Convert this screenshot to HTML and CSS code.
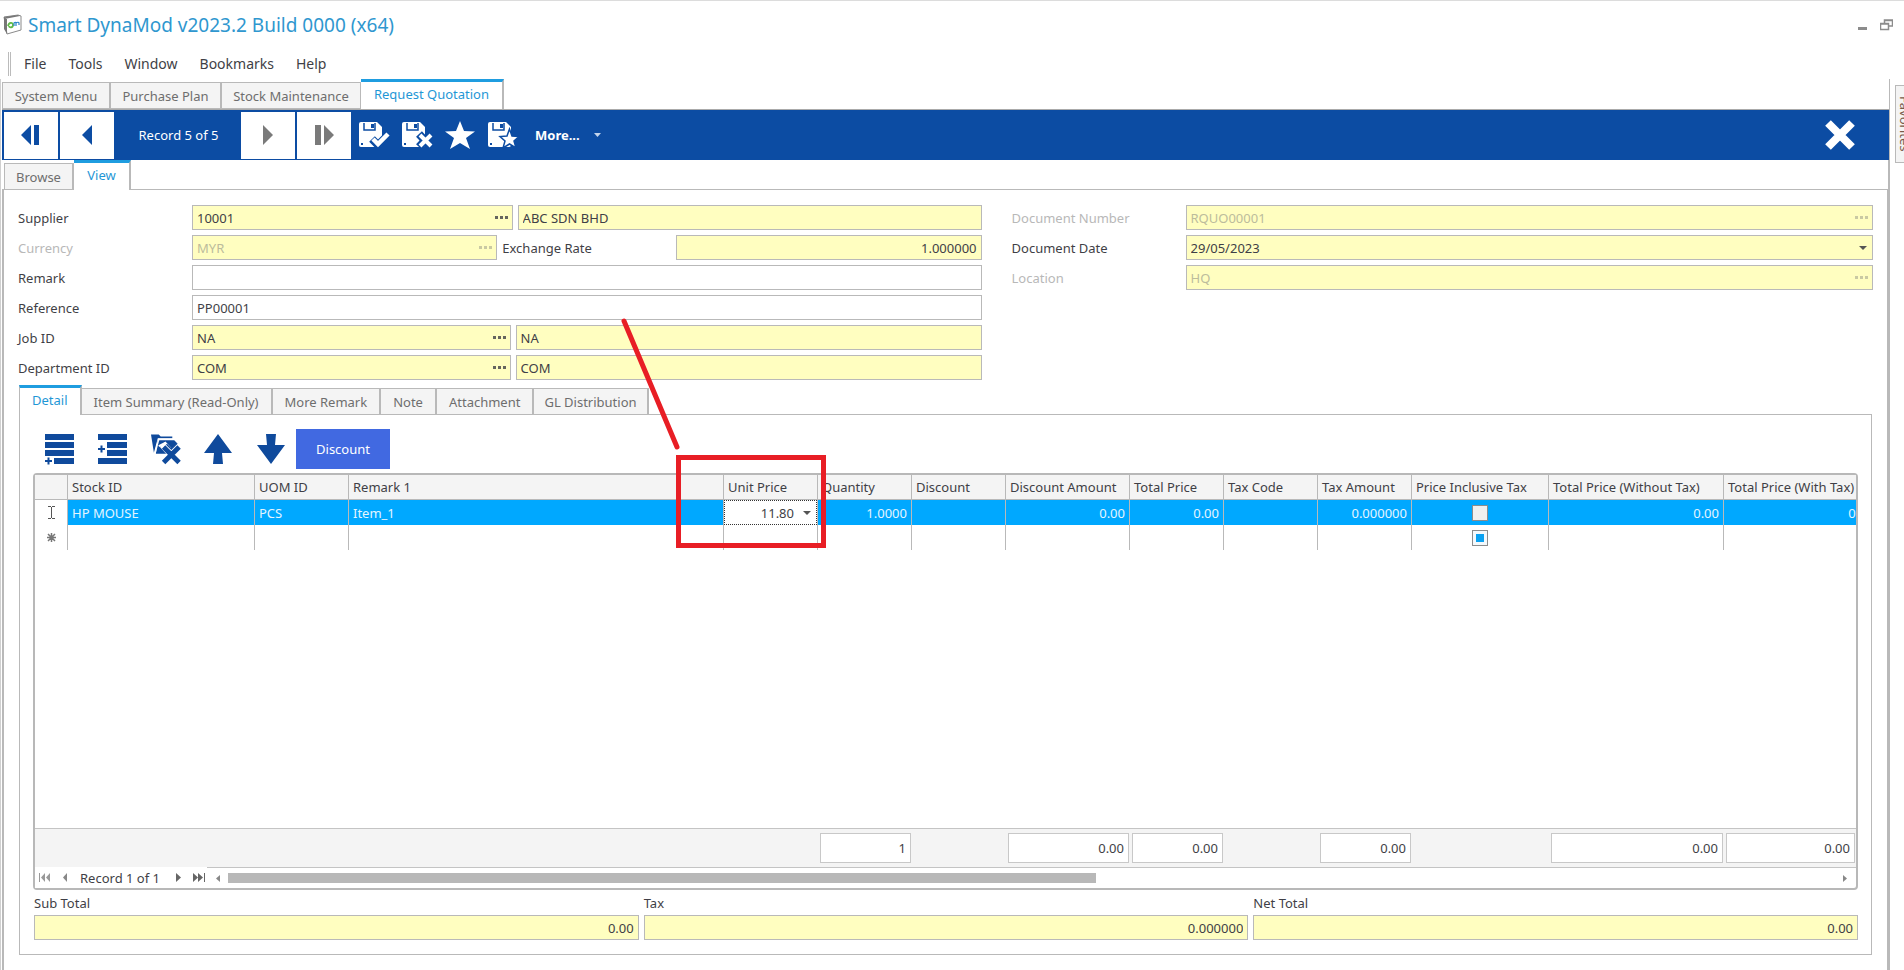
FILE: index.html
```
<!DOCTYPE html>
<html lang="en">
<head>
  <meta charset="UTF-8">
  <meta name="viewport" content="width=device-width, initial-scale=1.0">
  <title>Smart DynaMod</title>
  <link rel="stylesheet" href="styles.css">
</head>
<body>
  <header class="titlebar">
    <svg class="app-icon" width="20" height="22" viewBox="0 0 20 22">
      <path d="M1 3L15 1l3 1v14L4 20z" fill="#fff" stroke="#8a8a8a" stroke-width="1"/>
      <path d="M1 3L15 1l2 1L4 4.500z M1 3v12l3 5V5z" fill="#777"/>
      <path d="M5 12c1-4 5-4 5-1s-4 3-4 1" fill="none" stroke="#5fb946" stroke-width="1.800"/>
      <path d="M11 12V9c1-1 2-1 2 0v3m0-3c1-1 3-1 3 0v2" fill="none" stroke="#2a86c8" stroke-width="1.200"/>
    </svg>
    <h1>Smart DynaMod v2023.2 Build 0000 (x64)</h1>
    <div class="window-buttons">
      <button type="button" aria-label="Minimize"><svg width="10" height="12"><path d="M0 9.500h9" stroke="#8c8c8c" stroke-width="3"/></svg></button>
      <button type="button" aria-label="Restore"><svg width="13" height="12" fill="none" stroke="#8c8c8c"><path d="M4.500 4V1h8v6H9M4 1.500h9" stroke-width="1.500"/><path d="M.500 4.500h8v6h-8zM0 5h9" stroke-width="1.500"/></svg></button>
    </div>
  </header>

  <nav class="menu">
    <button type="button">File</button>
    <button type="button">Tools</button>
    <button type="button">Window</button>
    <button type="button">Bookmarks</button>
    <button type="button">Help</button>
  </nav>

  <div class="workspace">
    <div class="document">
      <div class="tabs main-tabs">
        <button type="button">System Menu</button>
        <button type="button">Purchase Plan</button>
        <button type="button">Stock Maintenance</button>
        <button type="button" class="active">Request Quotation</button>
      </div>

      <div class="toolbar">
        <button type="button" class="nav-btn" aria-label="First record"><svg width="20" height="20" fill="#0c4ca3"><path d="M10 0v20L0 10zM13 0h5v20h-5z"/></svg></button>
        <button type="button" class="nav-btn" aria-label="Previous record"><svg width="10" height="20" fill="#0c4ca3"><path d="M10 0v20L0 10z"/></svg></button>
        <span class="record">Record 5 of 5</span>
        <button type="button" class="nav-btn" aria-label="Next record"><svg width="10" height="20" fill="#7a7a7a"><path d="M0 0v20l10-10z"/></svg></button>
        <button type="button" class="nav-btn" aria-label="Last record"><svg width="20" height="20" fill="#7a7a7a"><path d="M10 0v20l10-10zM1 0h6v20H1z"/></svg></button>
        <button type="button" class="tool" aria-label="Save and new">
          <svg width="32" height="28" viewBox="0 0 32 28">
            <path d="M3 1h16l5 5v18q0 2-2 2H3q-2 0-2-2V3q0-2 2-2z" fill="#fff"/>
            <path d="M6 2v7h11V2" fill="none" stroke="#0c4ca3" stroke-width="1.500"/><path d="M13 3h3v4h-3zM3 22h2v2H3z" fill="#0c4ca3"/>
            <path d="M14 18l6 6 11-11" fill="none" stroke="#0c4ca3" stroke-width="8"/><path d="M15 18l5 5 10-10" fill="none" stroke="#fff" stroke-width="4.500"/>
          </svg>
        </button>
        <button type="button" class="tool" aria-label="Save and close">
          <svg width="32" height="28" viewBox="0 0 32 28">
            <path d="M3 1h16l5 5v18q0 2-2 2H3q-2 0-2-2V3q0-2 2-2z" fill="#fff"/>
            <path d="M6 2v7h11V2" fill="none" stroke="#0c4ca3" stroke-width="1.500"/><path d="M13 3h3v4h-3zM3 22h2v2H3z" fill="#0c4ca3"/>
            <path d="M18 13l12 13M30 13L18 26" fill="none" stroke="#0c4ca3" stroke-width="8"/><path d="M19 14l11 11M30 14L19 25" fill="none" stroke="#fff" stroke-width="4"/>
          </svg>
        </button>
        <button type="button" class="tool" aria-label="Bookmark">
          <svg width="32" height="28" viewBox="0 0 32 28"><path d="M16 0l4 10 11 .500-9 6.500 4 11-10-6-10 6 4-11-9-6.500L12 10z" fill="#fff"/></svg>
        </button>
        <button type="button" class="tool" aria-label="Save as favourite">
          <svg width="32" height="28" viewBox="0 0 32 28">
            <path d="M3 1h16l5 5v18q0 2-2 2H3q-2 0-2-2V3q0-2 2-2z" fill="#fff"/>
            <path d="M6 2v7h11V2" fill="none" stroke="#0c4ca3" stroke-width="1.500"/><path d="M13 3h3v4h-3zM3 22h2v2H3z" fill="#0c4ca3"/>
            <path d="M22.500 8l2.500 7 7 .500-5 4.500 2 7-6.500-4-6.500 4 2-7-5-4.500 7-.500z" fill="#fff" stroke="#0c4ca3" stroke-width="1.500"/>
          </svg>
        </button>
        <button type="button" class="more">More... <svg width="8" height="4" fill="#c5d5ec"><path d="M0 0h7L3.500 4z"/></svg></button>
        <button type="button" class="close" aria-label="Close"><svg width="30" height="30"><path d="M3 3l24 24M27 3L3 27" stroke="#fff" stroke-width="8"/></svg></button>
      </div>

      <div class="tabs view-tabs">
        <button type="button">Browse</button>
        <button type="button" class="active">View</button>
      </div>

      <main class="view">
        <form class="form">
          <div class="form-left">
            <div class="row supplier">
              <label for="supplier">Supplier</label>
              <div class="field"><input id="supplier" value="10001"><button type="button" aria-label="Find supplier"><svg class="dots" width="13" height="3"><path d="M0 0h3v3H0zM5 0h3v3H5zM10 0h3v3h-3z"/></svg></button></div>
              <div class="field"><input aria-label="Supplier name" value="ABC SDN BHD"></div>
            </div>
            <div class="row currency">
              <label for="currency" class="off">Currency</label>
              <div class="field"><input id="currency" value="MYR" disabled><button type="button" aria-label="Find currency" disabled><svg class="dots" width="13" height="3"><path d="M0 0h3v3H0zM5 0h3v3H5zM10 0h3v3h-3z"/></svg></button></div>
              <label for="rate">Exchange Rate</label>
              <div class="field"><input id="rate" class="num" value="1.000000"></div>
            </div>
            <div class="row">
              <label for="remark">Remark</label>
              <div class="field plain"><input id="remark"></div>
            </div>
            <div class="row">
              <label for="reference">Reference</label>
              <div class="field plain"><input id="reference" value="PP00001"></div>
            </div>
            <div class="row pair">
              <label for="job">Job ID</label>
              <div class="field"><input id="job" value="NA"><button type="button" aria-label="Find job"><svg class="dots" width="13" height="3"><path d="M0 0h3v3H0zM5 0h3v3H5zM10 0h3v3h-3z"/></svg></button></div>
              <div class="field"><input aria-label="Job name" value="NA"></div>
            </div>
            <div class="row pair">
              <label for="department">Department ID</label>
              <div class="field"><input id="department" value="COM"><button type="button" aria-label="Find department"><svg class="dots" width="13" height="3"><path d="M0 0h3v3H0zM5 0h3v3H5zM10 0h3v3h-3z"/></svg></button></div>
              <div class="field"><input aria-label="Department name" value="COM"></div>
            </div>
          </div>
          <div class="form-right">
            <div class="row">
              <label for="docno" class="off">Document Number</label>
              <div class="field"><input id="docno" value="RQUO00001" disabled><button type="button" aria-label="Find document" disabled><svg class="dots" width="13" height="3"><path d="M0 0h3v3H0zM5 0h3v3H5zM10 0h3v3h-3z"/></svg></button></div>
            </div>
            <div class="row">
              <label for="docdate">Document Date</label>
              <div class="field"><select id="docdate"><option>29/05/2023</option></select><svg class="caret" width="8" height="4"><path d="M0 0h8L4 4z"/></svg></div>
            </div>
            <div class="row">
              <label for="location" class="off">Location</label>
              <div class="field"><input id="location" value="HQ" disabled><button type="button" aria-label="Find location" disabled><svg class="dots" width="13" height="3"><path d="M0 0h3v3H0zM5 0h3v3H5zM10 0h3v3h-3z"/></svg></button></div>
            </div>
          </div>
        </form>

        <div class="tabs detail-tabs">
          <button type="button" class="active">Detail</button>
          <button type="button">Item Summary (Read-Only)</button>
          <button type="button">More Remark</button>
          <button type="button">Note</button>
          <button type="button">Attachment</button>
          <button type="button">GL Distribution</button>
        </div>

        <section class="detail">
          <div class="actions">
            <button type="button" aria-label="Add row"><svg width="30" height="32" fill="#0f4a9c"><path d="M0 1h29v6H0zM0 9h29v6H0zM0 17h29v6H0zM9 25h20v6H9zM0 27h7v2H0zM2.500 24.500h2v7h-2z"/></svg></button>
            <button type="button" aria-label="Insert row"><svg width="30" height="32" fill="#0f4a9c"><path d="M0 1h29v6H0zM9 9h20v6H9zM9 17h20v6H9zM0 25h29v6H0zM0 15h7v2H0zM2.500 12.500h2v7h-2z"/></svg></button>
            <button type="button" aria-label="Delete row">
              <svg width="30" height="32" viewBox="0 0 31 32">
                <path d="M0 1h8l2 2h12v2H7L3 20z" fill="#0f4a9c"/><path d="M7 7h17l3 3-7 11H5z" fill="#0f4a9c"/>
                <path d="M4 21L8 6h19" fill="none" stroke="#fff" stroke-width="1.500"/>
                <path d="M12 11l18 20M30 13L11 31" stroke="#fff" stroke-width="8"/>
                <path d="M8 13l6-3 7 7 7-7" fill="none" stroke="#fff" stroke-width="2"/>
                <path d="M13 14l16 16M29 14L13 30" stroke="#0f4a9c" stroke-width="5"/>
                <path d="M16 11l5 5 6-6" fill="none" stroke="#0f4a9c" stroke-width="1.500"/>
              </svg>
            </button>
            <button type="button" aria-label="Move up"><svg width="28" height="32" fill="#0f4a9c"><path d="M14 1l14 19H18l1 11H9l1-11H0z"/></svg></button>
            <button type="button" aria-label="Move down"><svg width="28" height="32" fill="#0f4a9c"><path d="M14 31L0 12h10L9 1h10l-1 11h10z"/></svg></button>
            <button type="button" class="discount">Discount</button>
          </div>

          <div class="grid">
            <div class="grid-body">
              <table>
                <colgroup>
                  <col class="w-mark"><col class="w-stock"><col class="w-std"><col class="w-remark"><col class="w-std"><col class="w-std"><col class="w-std"><col class="w-amount"><col class="w-std"><col class="w-std"><col class="w-std"><col class="w-incl"><col class="w-total"><col class="w-last">
                </colgroup>
                <thead>
                  <tr>
                    <th></th><th>Stock ID</th><th>UOM ID</th><th>Remark 1</th><th>Unit Price</th><th>Quantity</th><th>Discount</th><th>Discount Amount</th><th>Total Price</th><th>Tax Code</th><th>Tax Amount</th><th>Price Inclusive Tax</th><th>Total Price (Without Tax)</th><th>Total Price (With Tax)</th>
                  </tr>
                </thead>
                <tbody>
                  <tr class="selected">
                    <td class="mark"><svg width="9" height="13" fill="none" stroke="#555"><path d="M1 .500h3M5 .500h3M4.500 1v11M1 12.500h3M5 12.500h3"/></svg></td>
                    <td>HP MOUSE</td><td>PCS</td><td>Item_1</td>
                    <td class="editing"><div class="editor"><input aria-label="Unit Price" value="11.80"><button type="button" aria-label="Open calculator"><svg class="caret" width="8" height="4"><path d="M0 0h8L4 4z"/></svg></button></div></td>
                    <td class="num">1.0000</td><td></td><td class="num">0.00</td><td class="num">0.00</td><td></td><td class="num">0.000000</td>
                    <td class="check"><input type="checkbox" aria-label="Price Inclusive Tax"></td>
                    <td class="num">0.00</td><td class="num">0.00</td>
                  </tr>
                  <tr>
                    <td class="mark"><svg width="9" height="9" stroke="#777" stroke-width="1.500"><path d="M4.500 0v9M0 4.500h9M1 1l7 7M8 1L1 8"/></svg></td>
                    <td></td><td></td><td></td><td></td><td></td><td></td><td></td><td></td><td></td><td></td>
                    <td class="check"><input type="checkbox" class="mixed" aria-label="Price Inclusive Tax, new row"></td>
                    <td></td><td></td>
                  </tr>
                </tbody>
              </table>
            </div>
            <div class="summary">
              <output class="s-qty">1</output>
              <output class="s-disc">0.00</output>
              <output class="s-price">0.00</output>
              <output class="s-tax">0.00</output>
              <output class="s-without">0.00</output>
              <output class="s-with">0.00</output>
            </div>
            <div class="pager">
              <div class="pager-nav">
                <button type="button" aria-label="First"><svg width="12" height="9" fill="#999"><path d="M0 0h1v9H0zM6 0v9L2 4.500zM11 0v9L7 4.500z"/></svg></button>
                <button type="button" aria-label="Previous"><svg width="5" height="9" fill="#888"><path d="M4 0v9L0 4.500z"/></svg></button>
                <span>Record 1 of 1</span>
                <button type="button" aria-label="Next"><svg width="5" height="9" fill="#666"><path d="M0 0v9l5-4.500z"/></svg></button>
                <button type="button" aria-label="Last"><svg width="12" height="9" fill="#666"><path d="M11 0h1v9h-1zM0 0v9l5-4.500zM5 0v9l5-4.500z"/></svg></button>
              </div>
              <div class="scroll">
                <svg width="4" height="7" fill="#888"><path d="M4 0v7L0 3.500z"/></svg>
                <div class="track"><div class="thumb"></div></div>
                <svg width="4" height="7" fill="#888"><path d="M0 0v7l4-3.500z"/></svg>
              </div>
            </div>
            <div class="callout">
              <svg width="60" height="136"><path d="M4 5l53 126" stroke="#e81e25" stroke-width="5" stroke-linecap="round"/></svg>
            </div>
          </div>

          <div class="totals">
            <div class="total"><label for="subtotal">Sub Total</label><div class="field"><input id="subtotal" class="num" value="0.00"></div></div>
            <div class="total"><label for="tax">Tax</label><div class="field"><input id="tax" class="num" value="0.000000"></div></div>
            <div class="total"><label for="nettotal">Net Total</label><div class="field"><input id="nettotal" class="num" value="0.00"></div></div>
          </div>
        </section>
      </main>
    </div>
    <aside class="dock"><button type="button">Favorites</button></aside>
  </div>
</body>
</html>
```
FILE: styles.css
```
* {
  box-sizing: border-box;
}
body {
  margin: 0;
  height: 100vh;
  display: flex;
  flex-direction: column;
  overflow: hidden;
  border-top: 1px solid #dcdcdc;
  background: #fff;
  color: #3f3f46;
  font-family: "Noto Sans", Tahoma, sans-serif;
  font-size: 13px;
  line-height: 18px;
}
button, input, select {
  margin: 0;
  padding: 0;
  border: none;
  border-radius: 0;
  background: none;
  color: inherit;
  font: inherit;
}
svg {
  display: block;
  flex: none;
}
.titlebar {
  display: flex;
  align-items: center;
  height: 48px;
  padding: 0 11px 0 3px;
}
.titlebar h1 {
  flex: 1;
  margin: 0 5px;
  color: #2f97cf;
  font-size: 19px;
  font-weight: normal;
}
.window-buttons {
  display: flex;
  gap: 12px;
}
.menu {
  display: flex;
  align-items: center;
  gap: 22px;
  height: 24px;
  margin: 3px 0 3px 8px;
  padding-left: 13px;
  border-left: 3px double #bbb;
  font-size: 14px;
}
.workspace {
  flex: 1;
  display: flex;
  min-height: 0;
}
.document {
  flex: 1;
  min-width: 0;
  display: flex;
  flex-direction: column;
  border-left: 1px solid #d0d0d0;
  padding-left: 1px;
}
.tabs {
  display: flex;
  align-items: flex-end;
  position: relative;
}
.tabs button {
  height: 27px;
  border: 1px solid #b9b9b9;
  border-right-width: 2px;
  border-left: none;
  background: #f4f4f4;
  color: #6e6e6e;
}
.tabs button:first-child {
  border-left: 1px solid #b9b9b9;
}
.tabs .active {
  height: 30px;
  padding-bottom: 3px;
  border-top: 3px solid #1f9de0;
  border-bottom: none;
  background: #fff;
  color: #1f97d6;
}
.main-tabs button {
  flex: 0 0 111px;
}
.main-tabs button:first-child {
  flex-basis: 109px;
}
.main-tabs button:nth-child(3) {
  flex-basis: 139px;
  border-right-width: 1px;
}
.main-tabs .active {
  flex-basis: 143px;
}
.toolbar {
  display: flex;
  align-items: center;
  flex: none;
  height: 51px;
  padding: 1px 34px 1px 2px;
  border-top: 1px solid #aaa;
  background: #0c4ca3;
  color: #fff;
}
.nav-btn {
  display: flex;
  align-items: center;
  justify-content: center;
  width: 54px;
  height: 47px;
  margin-right: 2px;
  background: #fff;
}
.record {
  width: 125px;
  text-align: center;
}
.tool {
  margin-left: 5px;
  margin-right: 6px;
}
.more {
  display: flex;
  align-items: center;
  gap: 14px;
  margin-left: 10px;
  font-weight: bold;
}
.close {
  margin-left: auto;
}
.view-tabs {
  z-index: 1;
  margin: 0 0 -1px 2px;
}
.view-tabs button {
  flex: 0 0 70px;
}
.view-tabs .active {
  flex-basis: 57px;
}
.view-tabs::before {
  content: "";
  position: absolute;
  right: 0;
  top: 0;
  bottom: 0;
  border-right: 1px solid #b9b9b9;
}
.view {
  flex: 1;
  display: flex;
  flex-direction: column;
  min-height: 0;
  padding: 15px;
  border: 2px solid #b9b9b9;
  border-top-width: 1px;
  border-bottom: none;
}
.form {
  display: flex;
  gap: 30px;
  height: 180px;
  margin: 0 -1px;
}
.form-left {
  flex: 963;
}
.form-right {
  flex: 861;
}
.row {
  display: flex;
  align-items: center;
  gap: 5px;
  margin-bottom: 5px;
}
.row > label {
  flex: 0 0 169px;
}
.row > .off {
  color: #b8b8b8;
}
.field {
  position: relative;
  display: flex;
  align-items: center;
  flex: 1 1 0;
  min-width: 0;
  height: 25px;
  border: 1px solid #b9b9b9;
  background: #fffec0;
}
.plain {
  background: #fff;
}
.field input, .field select {
  flex: 1;
  min-width: 0;
  width: 100%;
  height: 100%;
  padding: 0 4px;
  appearance: none;
}
.field button {
  width: 17px;
}
.field :disabled {
  color: #bcbc9c;
}
.field .caret {
  position: absolute;
  right: 5px;
  pointer-events: none;
}
.caret {
  fill: #555;
}
.dots {
  fill: currentColor;
  opacity: 0.8;
}
input.num {
  text-align: right;
}
.supplier .field:nth-child(2) {
  flex-grow: 320;
}
.supplier .field:nth-child(3) {
  flex-grow: 464;
}
.pair .field:nth-child(2) {
  flex-grow: 318;
}
.pair .field:nth-child(3) {
  flex-grow: 466;
}
.detail-tabs {
  z-index: 1;
  margin-bottom: -1px;
}
.detail-tabs button {
  flex: none;
  padding: 0 12px;
}
.detail-tabs .active {
  padding-bottom: 3px;
}
.detail-tabs button:last-child {
  padding: 0 10px;
}
.detail {
  flex: 1;
  display: flex;
  flex-direction: column;
  min-height: 0;
  padding: 13px 13px 14px;
  border: 1px solid #b9b9b9;
}
.actions {
  display: flex;
  align-items: center;
  gap: 23px;
  height: 42px;
  margin: 0 0 3px 12px;
}
.actions button {
  width: 30px;
}
.actions .discount {
  width: 94px;
  height: 40px;
  margin-left: -14px;
  background: #4169e1;
  color: #fff;
}
.grid {
  position: relative;
  flex: 1;
  display: flex;
  flex-direction: column;
  min-height: 0;
  border: 2px solid #b8b8b8;
  border-radius: 4px;
}
.grid-body {
  flex: 1;
  overflow: hidden;
}
table {
  width: 1844px;
  border-collapse: separate;
  border-spacing: 0;
  table-layout: fixed;
}
.w-mark { width: 33px; }
.w-stock { width: 187px; }
.w-std { width: 94px; }
.w-remark { width: 375px; }
.w-amount { width: 124px; }
.w-incl { width: 137px; }
.w-total { width: 175px; }
.w-last { width: 155px; }
th, td {
  height: 25px;
  padding: 0 4px;
  border-right: 1px solid #b9b9b9;
  font-weight: normal;
  text-align: left;
  white-space: nowrap;
}
th {
  border-bottom: 1px solid #b9b9b9;
  background: #f4f4f4;
}
.selected td:not(.mark) {
  background: #00a8ff;
  color: #e4f5ff;
}
td.num {
  text-align: right;
}
td.mark svg {
  margin: 0 auto;
}
td.check {
  text-align: center;
}
.check input {
  display: block;
  width: 16px;
  height: 16px;
  margin: 0 auto;
  border: 1px solid #8c8c8c;
  background: #f0f0f0;
  appearance: none;
}
.check .mixed {
  background: #0aa2f2;
  box-shadow: inset 0 0 0 3px #f4f9fc;
}
.selected td.editing {
  padding: 0;
  background: #fff;
  color: #3f3f46;
}
.editor {
  display: flex;
  align-items: center;
  height: 25px;
  border: 1px dotted #333;
}
.editor input {
  flex: 1;
  min-width: 0;
  text-align: right;
}
.editor button {
  width: 22px;
  padding-left: 9px;
}
.summary {
  display: grid;
  grid-template-columns: 33px 187px 94px 375px 94px 94px 94px 124px 94px 94px 94px 137px 175px 1fr;
  height: 40px;
  padding: 4px 0 5px;
  border-top: 1px solid #c4c4c4;
  border-bottom: 1px solid #c4c4c4;
  background: #f4f4f4;
}
.summary output {
  margin: 0 1px 0 2px;
  padding: 5px 4px;
  border: 1px solid #c8c8c8;
  background: #fff;
  text-align: right;
}
.s-qty { grid-column: 6; }
.s-disc { grid-column: 8; }
.s-price { grid-column: 9; }
.s-tax { grid-column: 11; }
.s-without { grid-column: 13; }
.s-with { grid-column: 14; }
.pager {
  display: flex;
  height: 20px;
}
.pager-nav {
  display: flex;
  align-items: center;
  gap: 12px;
  padding: 0 2px 0 4px;
  margin-top: -1px;
  background: #fff;
}
.pager-nav span {
  min-width: 84px;
}
.scroll {
  flex: 1;
  display: flex;
  align-items: center;
  gap: 8px;
  padding: 0 9px;
}
.track {
  flex: 1;
}
.thumb {
  width: 54%;
  height: 10px;
  background: #b8b8b8;
}
/* red marker drawn over the Unit Price column */
.callout {
  position: absolute;
  left: 641px;
  top: -20px;
  width: 150px;
  height: 93px;
  border: 5px solid #e81e25;
  pointer-events: none;
}
.callout svg {
  position: absolute;
  right: 141px;
  bottom: 91px;
}
.totals {
  display: flex;
  gap: 5px;
  padding: 4px 0 0 1px;
}
.total {
  flex: 1;
}
.total label {
  display: block;
  margin-bottom: 3px;
}
.dock {
  flex: 0 0 15px;
  padding-left: 5px;
  overflow: hidden;
  border-left: 1px solid #b9b9b9;
}
.dock button {
  width: 28px;
  height: 78px;
  margin-top: 6px;
  padding-right: 8px;
  border: 1px solid #b9b9b9;
  background: #f4f4f4;
  color: #7a5a4a;
  writing-mode: vertical-rl;
}
```
